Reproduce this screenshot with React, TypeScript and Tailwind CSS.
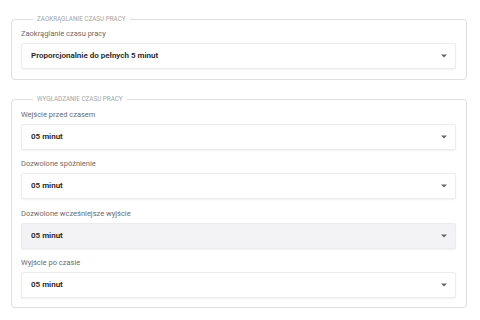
import { ReactNode } from "react";

type SelectProps = {
  value: string;
  disabled?: boolean;
};

function FakeSelect({ value, disabled }: SelectProps) {
  return (
    <div
      className={`flex h-[26px] items-center justify-between rounded-[2px] border border-[#ececec] pl-[9px] pr-[8px] shadow-[0_1px_2px_rgba(0,0,0,0.06)] ${
        disabled ? "bg-[#f3f3f5]" : "bg-white"
      }`}
    >
      <span className="text-[8px] font-semibold text-[#222]">{value}</span>
      <svg width="6" height="4" viewBox="0 0 6 4">
        <path d="M0 0.5h6L3 3.5z" fill="#666" />
      </svg>
    </div>
  );
}

function Field({ label, children }: { label: string; children: ReactNode }) {
  return (
    <div className="flex flex-col">
      <label className="mb-[4px] h-[10px] text-[7.5px] leading-[10px] text-[#6a6a6a]">
        {label}
      </label>
      {children}
    </div>
  );
}

function Group({
  title,
  className,
  children,
}: {
  title: string;
  className?: string;
  children: ReactNode;
}) {
  return (
    <fieldset
      className={`ml-[11px] w-[456px] rounded-[4px] border border-[#dedede] pl-[9px] pr-[10px] pb-[9px] ${className ?? ""}`}
    >
      <legend className="ml-[12px] h-[8px] px-[4px] text-[6.3px] uppercase leading-[8px] text-[#a4a4a4]">
        {title}
      </legend>
      {children}
    </fieldset>
  );
}

export default function App() {
  return (
    <div className="h-[320px] w-[480px] bg-white pt-[15px] font-['Roboto',sans-serif]">
      <Group title="Zaokrąglanie czasu pracy" className="pt-[6px] pb-[10px]">
        <Field label="Zaokrąglanie czasu pracy">
          <FakeSelect value="Proporcjonalnie do pełnych 5 minut" />
        </Field>
      </Group>
      <Group title="Wygładzanie czasu pracy" className="mt-[15px] pt-[7px]">
        <div className="flex flex-col gap-[9.4px]">
          <Field label="Wejście przed czasem">
            <FakeSelect value="05 minut" />
          </Field>
          <Field label="Dozwolone spóźnienie">
            <FakeSelect value="05 minut" />
          </Field>
          <Field label="Dozwolone wcześniejsze wyjście">
            <FakeSelect value="05 minut" disabled />
          </Field>
          <Field label="Wyjście po czasie">
            <FakeSelect value="05 minut" />
          </Field>
        </div>
      </Group>
    </div>
  );
}
